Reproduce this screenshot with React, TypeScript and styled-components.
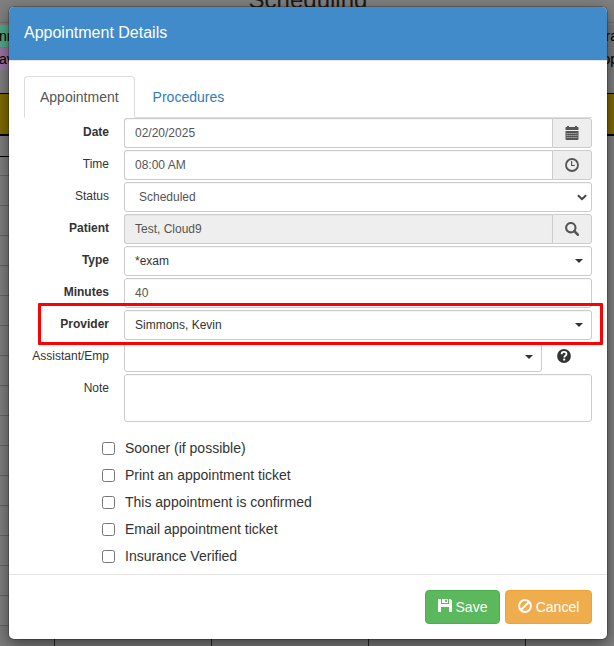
import React from "react";
import styled, { createGlobalStyle, css } from "styled-components";

const GlobalStyle = createGlobalStyle`
  *, *::before, *::after { box-sizing: border-box; }
  html, body { margin: 0; height: 100%; overflow: hidden; }
  body { font-family: "Liberation Sans", Arial, sans-serif; font-size: 14px; line-height: 20px; color: #333; background: #7f7f7f; }
`;

const Screen = styled.main`
  position: relative;
  width: 614px;
  height: 646px;
  overflow: hidden;
`;

/* Dimmed scheduling page behind the dialog */
const Page = styled.div`
  display: flex;
  flex-direction: column;
  height: 646px;
  background: #7f7f7f;
  color: #000;
`;
const PageTitle = styled.h1`
  margin: 0;
  height: 23px;
  padding-left: 2px;
  border-bottom: 1px solid #707070;
  text-align: center;
  font-size: 24px;
  font-weight: 400;
  line-height: 0;
  color: #1a1a1a;
`;
const Legend = styled.div<{ $top: number; $bg: string }>`
  display: flex;
  justify-content: space-between;
  flex: none;
  height: 22px;
  margin: ${(p) => p.$top}px -4px 0 -1px;
  line-height: 22px;
  background: linear-gradient(to right, ${(p) => p.$bg} 300px, #7a7a7a 300px);
`;
const AllDay = styled.div`
  flex: none;
  height: 43px;
  margin-top: 23px;
  border-top: 1px solid #000;
  border-bottom: 2px solid #000;
  background: #7f6a00;
`;
const Gap = styled.div`
  flex: none;
  width: 600px;
  height: 21px;
  border-bottom: 1px solid #000;
`;
const Slot = styled.div<{ $first?: boolean }>`
  flex: none;
  width: 600px;
  height: ${(p) => (p.$first ? 19 : 30)}px;
  border-bottom: 1px solid #656565;
`;
const Columns = styled.div`
  display: grid;
  flex: 1;
  grid-template-columns: 55px 157px 157px 157px 88px;
`;
const Column = styled.div`
  border-right: 1px solid #222;
  background: #7b7b7b;
`;

/* Dialog */
const Dialog = styled.section`
  position: absolute;
  left: 9px;
  top: 7px;
  display: flex;
  flex-direction: column;
  width: 598px;
  height: 632px;
  overflow: visible;
  border-radius: 5px;
  background: #fff;
  box-shadow: 0 0 0 1px rgba(0, 0, 0, 0.2), 0 5px 15px rgba(0, 0, 0, 0.5);
`;
const Header = styled.header`
  height: 54px;
  padding: 15px;
  border-bottom: 1px solid #e5e5e5;
  border-radius: 5px 5px 0 0;
  background: #428bca;
  color: #fff;
  font-size: 16px;
  line-height: 21px;
`;
const Body = styled.div`
  flex: 1;
  padding: 15px 15px 0;
`;
const Tabs = styled.nav`
  display: flex;
  height: 42px;
  border-bottom: 1px solid #ddd;
`;
const Tab = styled.a<{ $active?: boolean }>`
  height: 42px;
  margin-right: 2px;
  padding: 10px 15px;
  border: 1px solid transparent;
  border-radius: 4px 4px 0 0;
  color: #337ab7;
  ${(p) =>
    p.$active &&
    css`
      border-color: #ddd;
      border-bottom-color: #fff;
      background: #fff;
      color: #555;
    `}
`;
const Form = styled.form`
  display: flex;
  flex-direction: column;
  gap: 2px;
`;
const Row = styled.div`
  display: grid;
  grid-template-columns: 85px 468px;
  column-gap: 15px;
`;
const Label = styled.label<{ $bold?: boolean }>`
  justify-self: end;
  padding-top: 5px;
  font-size: 12px;
  line-height: 18px;
  font-weight: ${(p) => (p.$bold ? 700 : 400)};
  white-space: nowrap;
`;
const Control = styled.div<{ $shade?: boolean; $dark?: boolean; $inset?: boolean; $end?: "caret" | "select" }>`
  display: flex;
  flex: 1;
  align-items: center;
  justify-content: space-between;
  height: 30px;
  padding: 0 ${(p) => (p.$end === "caret" ? 8 : 4)}px 0 ${(p) => (p.$inset ? 14 : 10)}px;
  border: 1px solid #ccc;
  border-radius: 3px;
  background: ${(p) => (p.$shade ? "#eee" : "#fff")};
  box-shadow: inset 0 1px 1px rgba(0, 0, 0, 0.04);
  color: ${(p) => (p.$dark ? "#333" : "#555")};
  font-size: 12px;
`;
const Group = styled.div`
  display: flex;
  ${Control} {
    border-right: 0;
    border-radius: 3px 0 0 3px;
  }
`;
const Addon = styled.span`
  display: grid;
  place-items: center;
  width: 40px;
  height: 30px;
  border: 1px solid #ccc;
  border-radius: 0 3px 3px 0;
  background: #eee;
  color: #555;
`;
const Assist = styled.div`
  display: grid;
  grid-template-columns: 418px 14px;
  column-gap: 15px;
`;
const HelpSlot = styled.span`
  padding-top: 7px;
`;
const NoteBox = styled.div`
  height: 48px;
  border: 1px solid #ccc;
  border-radius: 3px;
  box-shadow: inset 0 1px 1px rgba(0, 0, 0, 0.04);
`;
const Checks = styled.div`
  display: flex;
  flex-direction: column;
  gap: 7px;
  padding: 16px 0 0 78px;
`;
const Check = styled.label`
  display: flex;
  align-items: center;
  gap: 10px;
  height: 20px;
`;
const Box = styled.input`
  appearance: none;
  width: 13px;
  height: 13px;
  margin: 1px 0 0;
  border: 1px solid #767676;
  border-radius: 2.5px;
  background: #fff;
`;
const Footer = styled.footer`
  display: flex;
  justify-content: flex-end;
  gap: 5px;
  height: 65px;
  padding: 15px;
  border-top: 1px solid #e5e5e5;
`;
const Icon = styled.svg`
  display: block;
  flex: none;
`;
const Button = styled.button<{ $tone: "save" | "cancel" }>`
  display: flex;
  align-items: center;
  justify-content: center;
  gap: 4px;
  width: ${(p) => (p.$tone === "save" ? 75 : 87)}px;
  height: 34px;
  padding: 0;
  border: 1px solid ${(p) => (p.$tone === "save" ? "#4cae4c" : "#eea236")};
  border-radius: 4px;
  background: ${(p) => (p.$tone === "save" ? "#5cb85c" : "#f0ad4e")};
  color: #fff;
  font: 14px/20px "Liberation Sans", Arial, sans-serif;
  ${Icon} {
    margin-bottom: 2px;
  }
`;
const Highlight = styled.div`
  position: absolute;
  left: 38px;
  top: 303px;
  width: 565px;
  height: 42px;
  border: 3px solid #f00;
  border-radius: 1px;
`;

const CalendarIcon = () => (
  <Icon width="14" height="14" viewBox="0 0 14 14" fill="currentColor">
    <path d="M2 0h2v1h6V0h2v1h1q.5 0 .5 1v2H.5V2q0-1 .5-1h1zM.5 5h13v8q0 1-1 1h-11q-1 0-1-1z" />
    <path d="M1.5 7.5h11M1.5 9.5h11M1.5 11.5h11" stroke="#eee" strokeOpacity=".75" strokeWidth=".9" strokeDasharray="1.2 .8" />
  </Icon>
);
const ClockIcon = () => (
  <Icon width="14" height="14" viewBox="0 0 14 14" fill="none" stroke="currentColor">
    <circle cx="7" cy="7" r="6" strokeWidth="1.8" />
    <path d="M6.6 3v4.5h3.2" strokeWidth="1.2" />
  </Icon>
);
const SearchIcon = () => (
  <Icon width="14" height="14" viewBox="0 0 14 14" fill="none" stroke="currentColor">
    <circle cx="5.8" cy="5.7" r="4.7" strokeWidth="2.1" />
    <path d="M9.3 9.2l3.5 3.5" strokeWidth="2.6" strokeLinecap="round" />
  </Icon>
);
const Caret = () => (
  <Icon width="8" height="4" viewBox="0 0 8 4" fill="#333">
    <path d="M0 0h8L4 4z" />
  </Icon>
);
const Chevron = () => (
  <Icon width="10" height="7" viewBox="0 0 10 7" fill="none" stroke="#444" strokeWidth="2">
    <path d="M.9 1.2L5 5.2l4.1-4" />
  </Icon>
);
const HelpIcon = () => (
  <Icon width="14" height="14" viewBox="0 0 14 14">
    <circle cx="7" cy="7" r="6.9" fill="#333" />
    <path d="M4.6 5.2C4.6 3.6 5.5 2.9 7 2.9s2.5.8 2.5 2.1c0 1.7-2.3 1.7-2.3 3.5" fill="none" stroke="#fff" strokeWidth="1.8" />
    <path d="M6.2 9.6h2v1.9h-2z" fill="#fff" />
  </Icon>
);
const SaveIcon = () => (
  <Icon width="14" height="14" viewBox="0 0 14 14" fill="currentColor">
    <path fillRule="evenodd" d="M0 0h3v5h8V0h1.5L14 1.5V13h-3V8H3v5H0zM4 0h6v4H4zM7.2.7v2.4H9V.7z" />
  </Icon>
);
const BanIcon = () => (
  <Icon width="14" height="14" viewBox="0 0 14 14" fill="none" stroke="currentColor" strokeWidth="2">
    <circle cx="7" cy="7" r="5.9" />
    <path d="M3 11l8-8" />
  </Icon>
);

const options = [
  "Sooner (if possible)",
  "Print an appointment ticket",
  "This appointment is confirmed",
  "Email appointment ticket",
  "Insurance Verified",
];

export default function App() {
  return (
    <Screen>
      <GlobalStyle />
      <Page>
        <PageTitle>Scheduling</PageTitle>
        <Legend $top={2} $bg="#55a88a"><span>nr</span><span>ra</span></Legend>
        <Legend $top={1} $bg="#9a75a6"><span>av</span><span>op</span></Legend>
        <AllDay />
        <Gap />
        <Slot $first />
        {Array.from({ length: 15 }, (_, i) => <Slot key={i} />)}
        <Columns>
          {Array.from({ length: 4 }, (_, i) => <Column key={i} />)}
        </Columns>
      </Page>
      <Dialog>
        <Header>Appointment Details</Header>
        <Body>
          <Tabs>
            <Tab $active>Appointment</Tab>
            <Tab>Procedures</Tab>
          </Tabs>
          <Form>
            <Row>
              <Label $bold>Date</Label>
              <Group><Control>02/20/2025</Control><Addon><CalendarIcon /></Addon></Group>
            </Row>
            <Row>
              <Label>Time</Label>
              <Group><Control>08:00 AM</Control><Addon><ClockIcon /></Addon></Group>
            </Row>
            <Row>
              <Label>Status</Label>
              <Control $inset $end="select">Scheduled<Chevron /></Control>
            </Row>
            <Row>
              <Label $bold>Patient</Label>
              <Group><Control $shade>Test, Cloud9</Control><Addon><SearchIcon /></Addon></Group>
            </Row>
            <Row>
              <Label $bold>Type</Label>
              <Control $dark $end="caret">*exam<Caret /></Control>
            </Row>
            <Row>
              <Label $bold>Minutes</Label>
              <Control>40</Control>
            </Row>
            <Row>
              <Label $bold>Provider</Label>
              <Control $dark $end="caret">Simmons, Kevin<Caret /></Control>
            </Row>
            <Row>
              <Label>Assistant/Emp</Label>
              <Assist>
                <Control $dark $end="caret"><span /><Caret /></Control>
                <HelpSlot><HelpIcon /></HelpSlot>
              </Assist>
            </Row>
            <Row>
              <Label>Note</Label>
              <NoteBox />
            </Row>
          </Form>
          <Checks>
            {options.map((text) => (
              <Check key={text}><Box type="checkbox" />{text}</Check>
            ))}
          </Checks>
        </Body>
        <Footer>
          <Button $tone="save"><SaveIcon />Save</Button>
          <Button $tone="cancel"><BanIcon />Cancel</Button>
        </Footer>
      </Dialog>
      <Highlight />
    </Screen>
  );
}
